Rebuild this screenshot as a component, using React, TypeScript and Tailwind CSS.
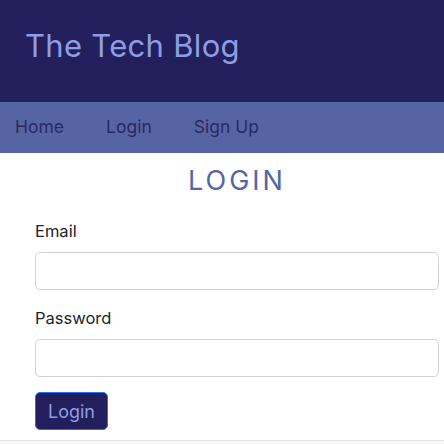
export default function App() {
  return (
    <div className="h-[444px] overflow-hidden bg-white font-['Inter','Noto_Sans',sans-serif] text-[#212529]">
      <header className="flex h-[102px] items-center bg-[#231f5c] px-[25px] pb-[12px]">
        <h1 className="text-[31px] leading-none tracking-[0.3px] text-[#8d9de3]">The Tech Blog</h1>
      </header>
      <nav className="flex h-[51px] items-center gap-[42px] bg-[#5664a4] px-[15px] text-[17.5px] text-[#2b2967]">
        <a href="#">Home</a>
        <a href="#">Login</a>
        <a href="#">Sign Up</a>
      </nav>
      <main className="pl-[35px] pr-[5px]">
        <h2 className="mt-[12px] text-center text-[27px] leading-[32px] tracking-[3px] text-[#5565a6]">LOGIN</h2>
        <form className="mt-[24px] flex flex-col">
          <label className="text-[16.5px] leading-[20px]">Email</label>
          <input
            type="email"
            className="mt-[11px] h-[38px] w-full rounded-[5px] border border-[#ced4da] px-3"
          />
          <label className="mt-[18px] text-[16.5px] leading-[20px]">Password</label>
          <input
            type="password"
            className="mt-[11px] h-[38px] w-full rounded-[5px] border border-[#ced4da] px-3"
          />
          <div className="mt-[15px]">
            <button
              type="submit"
              className="h-[38px] w-[73px] rounded-[5px] border border-[#2a6cf0] bg-[#231f5c] text-[18px] text-[#8d9de3]"
            >
              Login
            </button>
          </div>
        </form>
      </main>
      <footer className="mt-[10px] h-[20px] border-t border-[#e3e3e3] bg-[#f8f9fa]" />
    </div>
  );
}
